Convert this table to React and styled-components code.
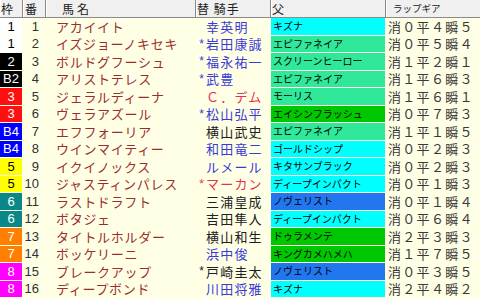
import React from "react";
import styled, { createGlobalStyle } from "styled-components";

const CREAM = "#ffffe6";
const FONT = '"Noto Sans CJK JP", "Noto Sans", sans-serif';
const COLS = "22px 22px 149px 74px 114px 94px";

const Global = createGlobalStyle`
  html, body { margin: 0; padding: 0; background: ${CREAM}; overflow: hidden; }
  body { font-family: ${FONT}; }
`;

const Table = styled.div`
  width: 480px;
  height: 299px;
  overflow: hidden;
  background: ${CREAM};
`;

const HeaderRow = styled.div`
  display: grid;
  grid-template-columns: ${COLS};
  column-gap: 1px;
  height: 17px;
  background: #8a8a8a;
  border-bottom: 1px solid #8a8a8a;
`;

const HeaderCell = styled.div`
  display: flex;
  align-items: center;
  background: #f0f0f0;
  box-shadow: inset 1px 0 0 #ffffff;
  padding-left: ${(p) => p.$pad || 1}px;
  font-size: ${(p) => p.$size || 12}px;
  letter-spacing: ${(p) => p.$spacing || 0}px;
  color: #202020;
  white-space: pre;
  line-height: 1;
`;

const Body = styled.div`
  display: grid;
  grid-template-columns: ${COLS};
  grid-auto-rows: 16.5px;
  column-gap: 1px;
  row-gap: 1px;
  background: ${CREAM};
`;

const WakuCell = styled.div`
  display: flex;
  align-items: center;
  justify-content: center;
  background: ${(p) => p.$bg};
  color: ${(p) => p.$fg};
  font-family: "Liberation Sans", sans-serif;
  font-size: 13px;
  line-height: 1;
`;

const BanCell = styled.div`
  display: flex;
  align-items: center;
  justify-content: flex-end;
  padding-right: 6px;
  background: ${CREAM};
  color: #303030;
  font-family: "Liberation Sans", sans-serif;
  font-size: 13px;
  line-height: 1;
`;

const NameCell = styled.div`
  display: flex;
  align-items: center;
  padding-left: 10px;
  background: ${CREAM};
  color: #9b2d2d;
  font-size: 13px;
  letter-spacing: 0.7px;
  white-space: nowrap;
  overflow: hidden;
  line-height: 1;
`;

const JockeyCell = styled.div`
  display: grid;
  grid-template-columns: 9px 1fr;
  align-items: center;
  padding-left: 1px;
  background: ${CREAM};
  color: ${(p) => p.$color};
  white-space: nowrap;
  overflow: hidden;
  line-height: 1;
`;

const Mark = styled.span`
  font-family: "Liberation Sans", sans-serif;
  font-size: 12px;
  text-align: center;
`;

const JockeyName = styled.span`
  font-size: 13px;
  letter-spacing: 1.2px;
`;

const SireCell = styled.div`
  display: flex;
  align-items: center;
  padding-left: 2px;
  background: ${(p) => p.$bg};
  color: #000;
  font-size: 10px;
  white-space: nowrap;
  overflow: hidden;
  line-height: 1;
`;

const LapCell = styled.div`
  display: flex;
  align-items: center;
  padding-left: 2px;
  background: ${CREAM};
  color: #383838;
  font-size: 13px;
  letter-spacing: 1.3px;
  white-space: nowrap;
  line-height: 1;
`;

const WAKU = {
  1: ["#ffffff", "#000000"],
  2: ["#000000", "#ffffff"],
  3: ["#ff1010", "#ffffff"],
  4: ["#0000ff", "#ffffff"],
  5: ["#ffff00", "#000000"],
  6: ["#0a8888", "#ffffff"],
  7: ["#ff8000", "#ffffff"],
  8: ["#ff00ff", "#ffffff"],
};

const SIRE = {
  cyan: "#00ffff",
  teal: "#30e89a",
  green: "#00c800",
  blue: "#2277ee",
};

const JC = { b: "#3a3ad8", k: "#202020", r: "#e83050" };

const rows = [
  [1, "1", "アカイイト", false, "幸英明", "b", "キズナ", "cyan", "消０平４瞬５"],
  [1, "1", "イズジョーノキセキ", true, "岩田康誠", "b", "エピファネイア", "teal", "消０平５瞬４"],
  [2, "2", "ボルドグフーシュ", true, "福永祐一", "b", "スクリーンヒーロー", "teal", "消１平２瞬１"],
  [2, "B2", "アリストテレス", true, "武豊", "b", "エピファネイア", "teal", "消１平６瞬３"],
  [3, "3", "ジェラルディーナ", false, "Ｃ．デム", "r", "モーリス", "teal", "消１平６瞬１"],
  [3, "3", "ヴェラアズール", true, "松山弘平", "b", "エイシンフラッシュ", "green", "消０平７瞬３"],
  [4, "B4", "エフフォーリア", false, "横山武史", "k", "エピファネイア", "teal", "消１平１瞬５"],
  [4, "B4", "ウインマイティー", false, "和田竜二", "b", "ゴールドシップ", "cyan", "消０平２瞬３"],
  [5, "5", "イクイノックス", false, "ルメール", "b", "キタサンブラック", "cyan", "消０平２瞬３"],
  [5, "5", "ジャスティンパレス", true, "マーカン", "r", "ディープインパクト", "cyan", "消０平１瞬３"],
  [6, "6", "ラストドラフト", false, "三浦皇成", "k", "ノヴェリスト", "blue", "消０平１瞬４"],
  [6, "6", "ボタジェ", false, "吉田隼人", "k", "ディープインパクト", "cyan", "消０平６瞬４"],
  [7, "7", "タイトルホルダー", false, "横山和生", "k", "ドゥラメンテ", "green", "消２平３瞬３"],
  [7, "7", "ボッケリーニ", false, "浜中俊", "b", "キングカメハメハ", "green", "消１平７瞬５"],
  [8, "8", "ブレークアップ", true, "戸崎圭太", "k", "ノヴェリスト", "blue", "消０平３瞬５"],
  [8, "8", "ディープボンド", false, "川田将雅", "b", "キズナ", "cyan", "消２平４瞬２"],
];

export default function App() {
  return (
    <>
      <Global />
      <Table>
        <HeaderRow>
          <HeaderCell $pad={1}>枠</HeaderCell>
          <HeaderCell $pad={2}>番</HeaderCell>
          <HeaderCell $pad={16} $spacing={3}>馬名</HeaderCell>
          <HeaderCell $pad={1} $spacing={1}>{"替 騎手"}</HeaderCell>
          <HeaderCell $pad={1}>父</HeaderCell>
          <HeaderCell $pad={7} $size={9.5}>ラップギア</HeaderCell>
        </HeaderRow>
        <Body>
          {rows.map(([w, wl, name, mark, jockey, jc, sire, sc, lap], i) => (
            <React.Fragment key={i}>
              <WakuCell $bg={WAKU[w][0]} $fg={WAKU[w][1]}>{wl}</WakuCell>
              <BanCell>{i + 1}</BanCell>
              <NameCell>{name}</NameCell>
              <JockeyCell $color={JC[jc]}>
                <Mark>{mark ? "*" : ""}</Mark>
                <JockeyName>{jockey}</JockeyName>
              </JockeyCell>
              <SireCell $bg={SIRE[sc]}>{sire}</SireCell>
              <LapCell>{lap}</LapCell>
            </React.Fragment>
          ))}
        </Body>
      </Table>
    </>
  );
}
